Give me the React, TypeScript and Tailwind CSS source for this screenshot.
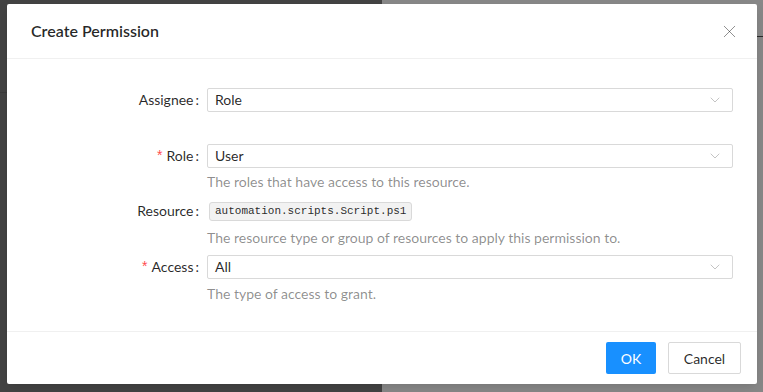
import { ChevronDown, X } from 'lucide-react';

const font = { fontFamily: 'Lato, "Open Sans", "Liberation Sans", sans-serif' };

function Label({ text, required }: { text: string; required?: boolean }) {
  return (
    <div className="flex w-[176px] shrink-0 items-center justify-end pb-[2px] pr-2 text-[14px] text-black/85">
      {required && <span className="mr-1 text-[14px] text-[#ff4d4f]" style={{ fontFamily: 'SimSun, "Liberation Sans", sans-serif' }}>*</span>}
      <span>{text}</span>
      <span className="ml-[2px]">:</span>
    </div>
  );
}

function Select({ value }: { value: string }) {
  return (
    <div className="flex h-6 flex-1 items-center justify-between rounded-[2px] border border-[#d9d9d9] bg-white pl-[7px] pr-[9px] text-[14px] text-black/85">
      <span className="pb-[2px]">{value}</span>
      <ChevronDown className="h-4 w-4 text-black/25" strokeWidth={1.4} />
    </div>
  );
}

function Help({ text, className }: { text: string; className: string }) {
  return (
    <div className={`flex ${className}`}>
      <div className="w-[176px] shrink-0" />
      <div className="text-[14px] leading-[22px] text-black/45">{text}</div>
    </div>
  );
}

export default function App() {
  return (
    <div className="relative h-[392px] w-[763px] overflow-hidden" style={font}>
      <div className="flex h-full">
        <div className="flex w-[382px] flex-col bg-[#434343]">
          <div className="h-[92px]" />
          <div className="h-px bg-[#3a3a3a]" />
        </div>
        <div className="flex flex-1 flex-col bg-[#888888]">
          <div className="h-[36px]" />
          <div className="h-px bg-[#2a2a2a]" />
        </div>
      </div>

      <div className="absolute left-[7px] top-[4px] w-[750px] rounded-[2px] bg-white shadow-[0_3px_6px_-4px_rgba(0,0,0,0.12),0_6px_16px_rgba(0,0,0,0.08)]">
        <div className="flex h-[55px] items-center justify-between border-b border-[#f0f0f0] pl-6 pr-[17px]">
          <div className="pb-[1px] text-[16px] font-semibold text-black/85">Create Permission</div>
          <X className="h-[21px] w-[21px] text-black/45" strokeWidth={1.1} />
        </div>

        <div className="px-6 pb-[26px] pt-[29px]">
          <div className="flex h-6">
            <Label text="Assignee" />
            <Select value="Role" />
          </div>

          <div className="mt-8 flex h-6">
            <Label text="Role" required />
            <Select value="User" />
          </div>
          <Help text="The roles that have access to this resource." className="mt-[3px]" />

          <div className="mt-[7px] flex h-[22px]">
            <Label text="Resource" />
            <div className="flex items-center pl-[2px]">
              <code
                className="flex h-[19px] items-center rounded-[3px] border border-[#d9d9d9] bg-[#f2f2f2] px-[5px] text-[11px] text-black/85"
                style={{ fontFamily: '"Liberation Mono", "DejaVu Sans Mono", monospace' }}
              >
                automation.scripts.Script.ps1
              </code>
            </div>
          </div>
          <Help text="The resource type or group of resources to apply this permission to." className="mt-[5px]" />

          <div className="mt-[6px] flex h-6">
            <Label text="Access" required />
            <Select value="All" />
          </div>
          <Help text="The type of access to grant." className="mt-[4px]" />
        </div>

        <div className="flex justify-end gap-3 border-t border-[#f0f0f0] px-4 py-[10px]">
          <button className="h-8 w-[50px] rounded-[2px] bg-[#1890ff] text-[14px] text-white">OK</button>
          <button className="h-8 w-[73px] rounded-[2px] border border-[#d9d9d9] bg-white text-[14px] text-black/85">Cancel</button>
        </div>
      </div>
    </div>
  );
}
